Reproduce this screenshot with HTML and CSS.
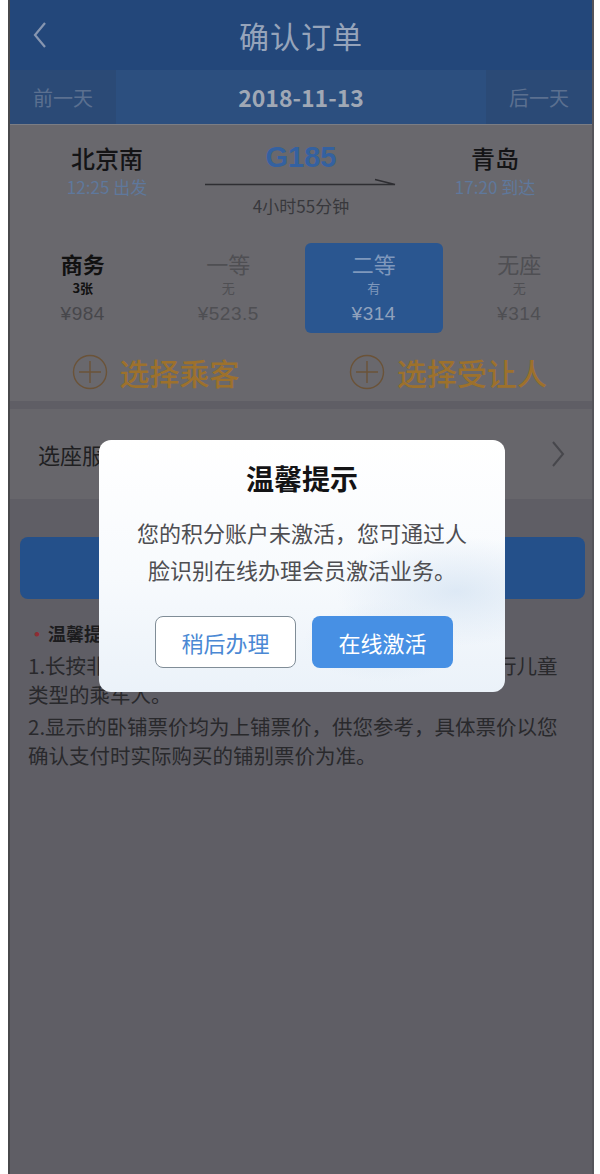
FILE: index.html
```html
<!DOCTYPE html>
<html>
<head>
    <meta charset="UTF-8">
    <meta name="viewport" content="width=device-width, initial-scale=1.0">
    <title>确认订单</title>
    <link rel="stylesheet" href="styles.css">
</head>
<body>
    <div class="phone">
        <header class="nav">
            <span class="nav-back">
                <svg width="16" height="28" viewBox="0 0 16 28"><path d="M13 2 L3 14 L13 26" fill="none" stroke="#8796b0" stroke-width="2.2"/></svg>
            </span>
            <h1 class="nav-title">确认订单</h1>
        </header>

        <div class="datebar">
            <span class="day-btn">前一天</span>
            <span class="date">2018-11-13</span>
            <span class="day-btn">后一天</span>
        </div>

        <section class="train-card">
            <div class="route">
                <div class="station">
                    <div class="station-name">北京南</div>
                    <div class="station-time">12:25 出发</div>
                </div>
                <div class="train">
                    <div class="train-code">G185</div>
                    <svg class="train-arrow" width="192" height="10" viewBox="0 0 192 10"><path d="M0 6.5 H190 L170 1.5" fill="none" stroke="#2e2e32" stroke-width="1.4"/></svg>
                    <div class="train-duration">4小时55分钟</div>
                </div>
                <div class="station">
                    <div class="station-name">青岛</div>
                    <div class="station-time">17:20 到达</div>
                </div>
            </div>

            <div class="seats">
                <div class="seat seat-open">
                    <div class="seat-name">商务</div>
                    <div class="seat-count">3张</div>
                    <div class="seat-price">¥984</div>
                </div>
                <div class="seat seat-none">
                    <div class="seat-name">一等</div>
                    <div class="seat-count">无</div>
                    <div class="seat-price">¥523.5</div>
                </div>
                <div class="seat seat-active">
                    <div class="seat-name">二等</div>
                    <div class="seat-count">有</div>
                    <div class="seat-price">¥314</div>
                </div>
                <div class="seat seat-none">
                    <div class="seat-name">无座</div>
                    <div class="seat-count">无</div>
                    <div class="seat-price">¥314</div>
                </div>
            </div>

            <div class="picks">
                <div class="pick">
                    <svg class="pick-icon" width="36" height="36" viewBox="0 0 36 36"><circle cx="18" cy="18" r="16.5" fill="none" stroke="#6b5338" stroke-width="1.4"/><path d="M18 7 V29 M7 18 H29" stroke="#6b5338" stroke-width="1.4"/></svg>
                    <span>选择乘客</span>
                </div>
                <div class="pick">
                    <svg class="pick-icon" width="36" height="36" viewBox="0 0 36 36"><circle cx="18" cy="18" r="16.5" fill="none" stroke="#6b5338" stroke-width="1.4"/><path d="M18 7 V29 M7 18 H29" stroke="#6b5338" stroke-width="1.4"/></svg>
                    <span>选择受让人</span>
                </div>
            </div>
        </section>

        <div class="service-row">
            <span>选座服务</span>
            <svg width="16" height="28" viewBox="0 0 16 28"><path d="M3 2 L13 14 L3 26" fill="none" stroke="#47474c" stroke-width="2"/></svg>
        </div>

        <div class="submit">提交订单</div>

        <div class="tips">
            <div class="tips-title"><span class="tips-dot">•</span>温馨提示</div>
            <p>1.长按非成人乘车人，可以将其修改为学生类型或进行儿童类型的乘车人。</p>
            <p>2.显示的卧铺票价均为上铺票价，供您参考，具体票价以您确认支付时实际购买的铺别票价为准。</p>
        </div>

        <div class="dialog">
            <h2 class="dialog-title">温馨提示</h2>
            <p class="dialog-text">您的积分账户未激活，您可通过人脸识别在线办理会员激活业务。</p>
            <div class="dialog-actions">
                <a href="#" class="btn btn-ghost">稍后办理</a>
                <a href="#" class="btn btn-primary">在线激活</a>
            </div>
        </div>
    </div>
</body>
</html>
```

FILE: styles.css
```css
* {
    box-sizing: border-box;
}

body {
    margin: 0;
    padding: 0 0 0 8px;
    background: #fff;
    font-family: "Noto Sans CJK SC", "Noto Sans", sans-serif;
}

.phone {
    position: relative;
    width: 586px;
    height: 1174px;
    background: #5f5e65;
    border-left: 2px solid #48484b;
    border-right: 2px solid #55545a;
    overflow: hidden;
}

/* top bar */
.nav {
    height: 70px;
    background: #23477a;
    display: flex;
    align-items: center;
    justify-content: center;
    position: relative;
}

.nav-back {
    position: absolute;
    left: 22px;
    top: 21px;
    line-height: 0;
}

.nav-title {
    margin: 0;
    font-size: 30px;
    font-weight: 400;
    color: #96a4ba;
    letter-spacing: 1px;
}

.datebar {
    height: 55px;
    background: #2c4f7f;
    display: flex;
    align-items: center;
    justify-content: space-between;
    border-bottom: 1px solid #7b7d84;
}

.day-btn {
    width: 106px;
    height: 100%;
    display: flex;
    align-items: center;
    justify-content: center;
    background: #2b4a76;
    color: #5b7090;
    font-size: 20px;
}

.date {
    font-size: 23px;
    font-weight: 700;
    color: #a0a8b5;
}

/* train info */
.train-card {
    background: #69686d;
    padding: 18px 0 8px;
}

.route {
    display: grid;
    grid-template-columns: 194px 1fr 194px;
    align-items: start;
}

.station {
    text-align: center;
}

.station-name {
    font-size: 24px;
    line-height: 30px;
    color: #141416;
    font-weight: 500;
}

.station-time {
    margin-top: 2px;
    font-size: 17px;
    line-height: 24px;
    color: #5f789c;
}

.train {
    display: flex;
    flex-direction: column;
    align-items: center;
    margin-top: -3px;
}

.train-code {
    font-family: "Liberation Sans", Arial, sans-serif;
    font-size: 29px;
    line-height: 34px;
    font-weight: 700;
    color: #3461a0;
}

.train-arrow {
    margin-top: 4px;
}

.train-duration {
    margin-top: 6px;
    font-size: 17px;
    line-height: 24px;
    color: #38383c;
}

.seats {
    display: grid;
    grid-template-columns: repeat(4, 1fr);
    margin-top: 25px;
}

.seat {
    margin: 0 4px;
    padding: 6px 0 6px;
    border-radius: 6px;
    text-align: center;
}

.seat-name {
    font-size: 22px;
    line-height: 28px;
}

.seat-count {
    margin-top: 2px;
    font-size: 13px;
    line-height: 18px;
}

.seat-price {
    margin-top: 4px;
    font-family: "Liberation Sans", Arial, sans-serif;
    font-size: 19px;
    line-height: 26px;
    letter-spacing: 0.5px;
}

.seat-open .seat-name,
.seat-open .seat-count {
    color: #111;
    font-weight: 700;
}

.seat-open .seat-price {
    color: #47474b;
}

.seat-none {
    color: #4f4f53;
}

.seat-active {
    background: #2a5690;
    color: #7f98bc;
}

.seat-active .seat-price {
    color: #90a2bd;
}

.picks {
    display: grid;
    grid-template-columns: 1fr 1fr;
    margin-top: 18px;
}

.pick {
    display: flex;
    align-items: center;
    justify-content: center;
    gap: 12px;
    height: 42px;
    font-size: 30px;
    font-weight: 500;
    color: #9d712c;
}

.pick:last-child {
    justify-content: flex-start;
    padding-left: 48px;
}

.pick-icon {
    flex: none;
}

/* seat service */
.service-row {
    margin-top: 8px;
    height: 90px;
    background: #67666b;
    display: flex;
    align-items: center;
    justify-content: space-between;
    padding: 0 26px 0 28px;
    font-size: 22px;
    color: #1f1f22;
}

.submit {
    margin: 38px 7px 0 10px;
    height: 62px;
    border-radius: 8px;
    background: #24508a;
    color: #8ea2c0;
    font-size: 22px;
    display: flex;
    align-items: center;
    justify-content: center;
}

.tips {
    padding: 20px 14px 0 18px;
    color: #29292c;
}

.tips-title {
    font-size: 18px;
    line-height: 28px;
    font-weight: 700;
    color: #1c1c1e;
}

.tips-dot {
    color: #8e2d33;
    margin-right: 2px;
}

.tips p {
    margin: 4px 0 0;
    font-size: 20.5px;
    line-height: 28.5px;
    width: 540px;
}

/* modal */
.dialog {
    position: absolute;
    left: 89px;
    top: 440px;
    width: 406px;
    padding: 18px 30px 24px;
    border-radius: 12px;
    background:
        radial-gradient(ellipse 120px 55px at 88% 60%, rgba(205, 222, 240, 0.6), rgba(205, 222, 240, 0) 100%),
        radial-gradient(ellipse 80px 40px at 70% 80%, rgba(215, 229, 243, 0.5), rgba(215, 229, 243, 0) 100%),
        linear-gradient(180deg, #ffffff 0%, #f7fafd 55%, #ebf2f9 100%);
    text-align: center;
}

.dialog-title {
    margin: 0;
    font-size: 28px;
    line-height: 40px;
    font-weight: 700;
    color: #131315;
}

.dialog-text {
    margin: 16px 0 0;
    font-size: 22px;
    line-height: 37px;
    color: #4e4e52;
}

.dialog-actions {
    margin-top: 28px;
    display: flex;
    justify-content: center;
    gap: 16px;
    padding-left: 4px;
}

.btn {
    width: 141px;
    height: 52px;
    border-radius: 8px;
    display: flex;
    align-items: center;
    justify-content: center;
    font-size: 22px;
    text-decoration: none;
}

.btn-ghost {
    border: 1.5px solid #808d97;
    background: #fff;
    color: #4a88d4;
}

.btn-primary {
    background: #4790e4;
    color: #fff;
}
```
